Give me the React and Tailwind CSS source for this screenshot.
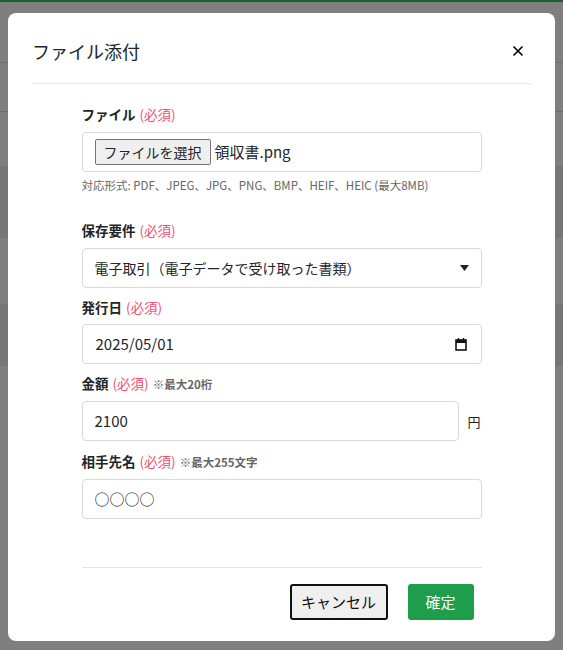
import { X } from "lucide-react";

const font = { fontFamily: '"Noto Sans CJK JP", "Noto Sans", sans-serif' };

function Label({ text, note }) {
  return (
    <div className="flex items-baseline gap-1 text-[13.5px] leading-[20px]">
      <span className="font-bold text-[#212529]">{text}</span>
      <span className="text-[#f0506e]">(必須)</span>
      {note && <span className="text-[11.5px] font-bold text-[#666]">{note}</span>}
    </div>
  );
}

export default function App() {
  return (
    <div style={font} className="relative h-[650px] w-[563px] overflow-hidden bg-[#7f7f7f]">
      {/* backdrop page hints */}
      <div className="h-[2px] bg-[#1d5e2e]" />
      <div className="mt-[60px] h-px bg-[#6e6e6e]" />
      <div className="mt-[48px] h-px bg-[#6e6e6e]" />
      <div className="mt-[54px] h-[72px] bg-[#767676]" />
      <div className="mt-[66px] h-[62px] bg-[#767676]" />

      <div className="absolute left-[8px] top-[13px] flex h-[628px] w-[547px] flex-col rounded-[8px] bg-white">
        <div className="flex items-center justify-between px-[24px] pt-[24px] pb-[18px]">
          <h2 className="text-[18px] leading-[28px] text-[#212529]">ファイル添付</h2>
          <X className="mr-[5px] h-[16px] w-[16px] text-black" strokeWidth={2.5} />
        </div>
        <div className="mx-[24px] h-px bg-[#e5e5ee]" />

        <div className="mx-auto flex w-[400px] flex-col pt-[20px]">
          <Label text="ファイル" />
          <div className="mt-[8px] flex h-[40px] items-center rounded-[4px] border border-[#d9d9d9] px-[12px] text-[15px] text-[#212529]">
            <span className="rounded-[2px] border border-[#767676] bg-[#efefef] px-[8px] text-[14px] leading-[24px]">ファイルを選択</span>
            <span className="ml-[4px]">領収書.png</span>
          </div>
          <div className="mt-[5px] text-[11.5px] text-[#666]">対応形式: PDF、JPEG、JPG、PNG、BMP、HEIF、HEIC (最大8MB)</div>

          <div className="mt-[26px]"><Label text="保存要件" /></div>
          <div className="mt-[8px] flex h-[40px] items-center justify-between rounded-[4px] border border-[#d9d9d9] px-[12px] text-[14px] text-[#212529]">
            <span>電子取引（電子データで受け取った書類）</span>
            <svg width="9" height="6" viewBox="0 0 9 6"><path d="M0 0h9L4.5 6z" fill="#222" /></svg>
          </div>

          <div className="mt-[9px]"><Label text="発行日" /></div>
          <div className="mt-[7px] flex h-[40px] items-center justify-between rounded-[4px] border border-[#d9d9d9] pl-[13px] pr-[14px] text-[15px] text-[#212529]">
            <span>2025/05/01</span>
            <svg width="12" height="13" viewBox="0 0 12 13"><rect x="1" y="2" width="10" height="10" fill="none" stroke="#111" strokeWidth="1.6" /><rect x="1" y="2" width="10" height="3" fill="#111" /><path d="M3.5 0v3M8.5 0v3" stroke="#111" strokeWidth="1.4" /></svg>
          </div>

          <div className="mt-[9px]"><Label text="金額" note="※最大20桁" /></div>
          <div className="mt-[7px] flex items-center">
            <div className="flex h-[40px] w-[377px] items-center rounded-[4px] border border-[#d9d9d9] px-[12px] text-[15px] text-[#212529]">2100</div>
            <span className="ml-[9px] text-[13px] text-[#212529]">円</span>
          </div>

          <div className="mt-[10px]"><Label text="相手先名" note="※最大255文字" /></div>
          <div className="mt-[7px] flex h-[40px] items-center rounded-[4px] border border-[#d9d9d9] px-[12px] text-[15px] text-[#212529]">
            <span className="font-['DejaVu_Sans']">○○○○</span>
          </div>

          <div className="mt-[48px] h-px bg-[#e5e5e5]" />
          <div className="mt-[16px] flex justify-end gap-[20px] pr-[8px]">
            <button className="h-[36px] w-[98px] rounded-[3px] border-2 border-[#111] bg-[#efefef] text-[15px] text-[#111]">キャンセル</button>
            <button className="h-[36px] w-[66px] rounded-[3px] bg-[#1e9e4a] text-[15px] text-white">確定</button>
          </div>
        </div>
      </div>
    </div>
  );
}
